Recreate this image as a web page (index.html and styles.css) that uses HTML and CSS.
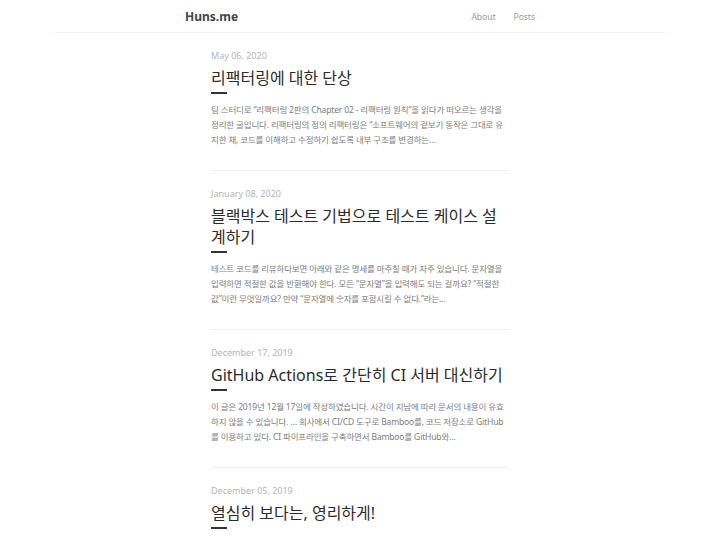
FILE: index.html
```html
<!DOCTYPE html>
<html lang="ko">
<head>
<meta charset="utf-8">
<title>Huns.me</title>
<link rel="stylesheet" href="styles.css">
</head>
<body>
<header class="site-header">
  <div class="header-inner">
    <a class="logo" href="#">Huns.me</a>
    <nav class="nav">
      <a href="#">About</a>
      <a href="#">Posts</a>
    </nav>
  </div>
</header>
<main class="posts">
  <article class="post">
    <div class="date">May 06, 2020</div>
    <h2 class="title">리팩터링에 대한 단상</h2>
    <p class="excerpt">팀 스터디로 “리팩터링 2판의 Chapter 02 - 리팩터링 원칙”을 읽다가 떠오르는 생각을 정리한 글입니다. 리팩터링의 정의 리팩터링은 “소프트웨어의 겉보기 동작은 그대로 유지한 채, 코드를 이해하고 수정하기 쉽도록 내부 구조를 변경하는...</p>
  </article>
  <article class="post">
    <div class="date">January 08, 2020</div>
    <h2 class="title">블랙박스 테스트 기법으로 테스트 케이스 설계하기</h2>
    <p class="excerpt">테스트 코드를 리뷰하다보면 아래와 같은 명세를 마주칠 때가 자주 있습니다. 문자열을 입력하면 적절한 값을 반환해야 한다. 모든 “문자열”을 입력해도 되는 걸까요? “적절한 값”이란 무엇일까요? 만약 “문자열에 숫자를 포함시킬 수 없다.”라는...</p>
  </article>
  <article class="post">
    <div class="date">December 17, 2019</div>
    <h2 class="title">GitHub Actions로 간단히 CI 서버 대신하기</h2>
    <p class="excerpt">이 글은 2019년 12월 17일에 작성하였습니다. 시간이 지남에 따라 문서의 내용이 유효하지 않을 수 있습니다. … 회사에서 CI/CD 도구로 Bamboo를, 코드 저장소로 GitHub를 이용하고 있다. CI 파이프라인을 구축하면서 Bamboo를 GitHub와...</p>
  </article>
  <article class="post">
    <div class="date">December 05, 2019</div>
    <h2 class="title">열심히 보다는, 영리하게!</h2>
    <p class="excerpt">열심히 일하는 것보다 영리하게 일하는 것이 중요하다는 이야기를 자주 듣습니다. 그렇다면 영리하게 일한다는 것은 무엇일까요? 일을 하면서 느꼈던 점들을 정리해 보았습니다...</p>
  </article>
</main>
</body>
</html>
```
FILE: styles.css
```css
* {
  box-sizing: border-box;
}

body {
  margin: 0;
  background: #fff;
  font-family: "Noto Sans", "Noto Sans CJK KR", sans-serif;
  color: #333;
}

a {
  text-decoration: none;
  color: inherit;
}

.site-header {
  width: 610px;
  margin: 0 auto;
  border-bottom: 1px solid #f0f0f0;
}

.header-inner {
  width: 350px;
  height: 32px;
  margin: 0 auto;
  display: flex;
  align-items: center;
  justify-content: space-between;
}

.logo {
  font-size: 12px;
  font-weight: 700;
  color: #444;
}

.nav {
  display: flex;
  gap: 18px;
  font-size: 8.5px;
  color: #9a9a9a;
}

.posts {
  width: 298px;
  margin: 0 auto;
}

.post {
  padding: 17px 0 23px;
  border-bottom: 1px solid #eeeeee;
}

.date {
  font-size: 9px;
  line-height: 12px;
  color: #b3b3b3;
}

.title {
  margin: 6px 0 0;
  font-size: 16px;
  line-height: 21px;
  font-weight: 400;
  color: #2b2b2b;
}

.title::after {
  content: "";
  display: block;
  width: 16px;
  height: 2px;
  margin-top: 3px;
  background: #333;
}

.excerpt {
  margin: 8px 0 0;
  font-size: 8.5px;
  line-height: 15px;
  letter-spacing: -0.15px;
  color: #7c7c7c;
}
```
